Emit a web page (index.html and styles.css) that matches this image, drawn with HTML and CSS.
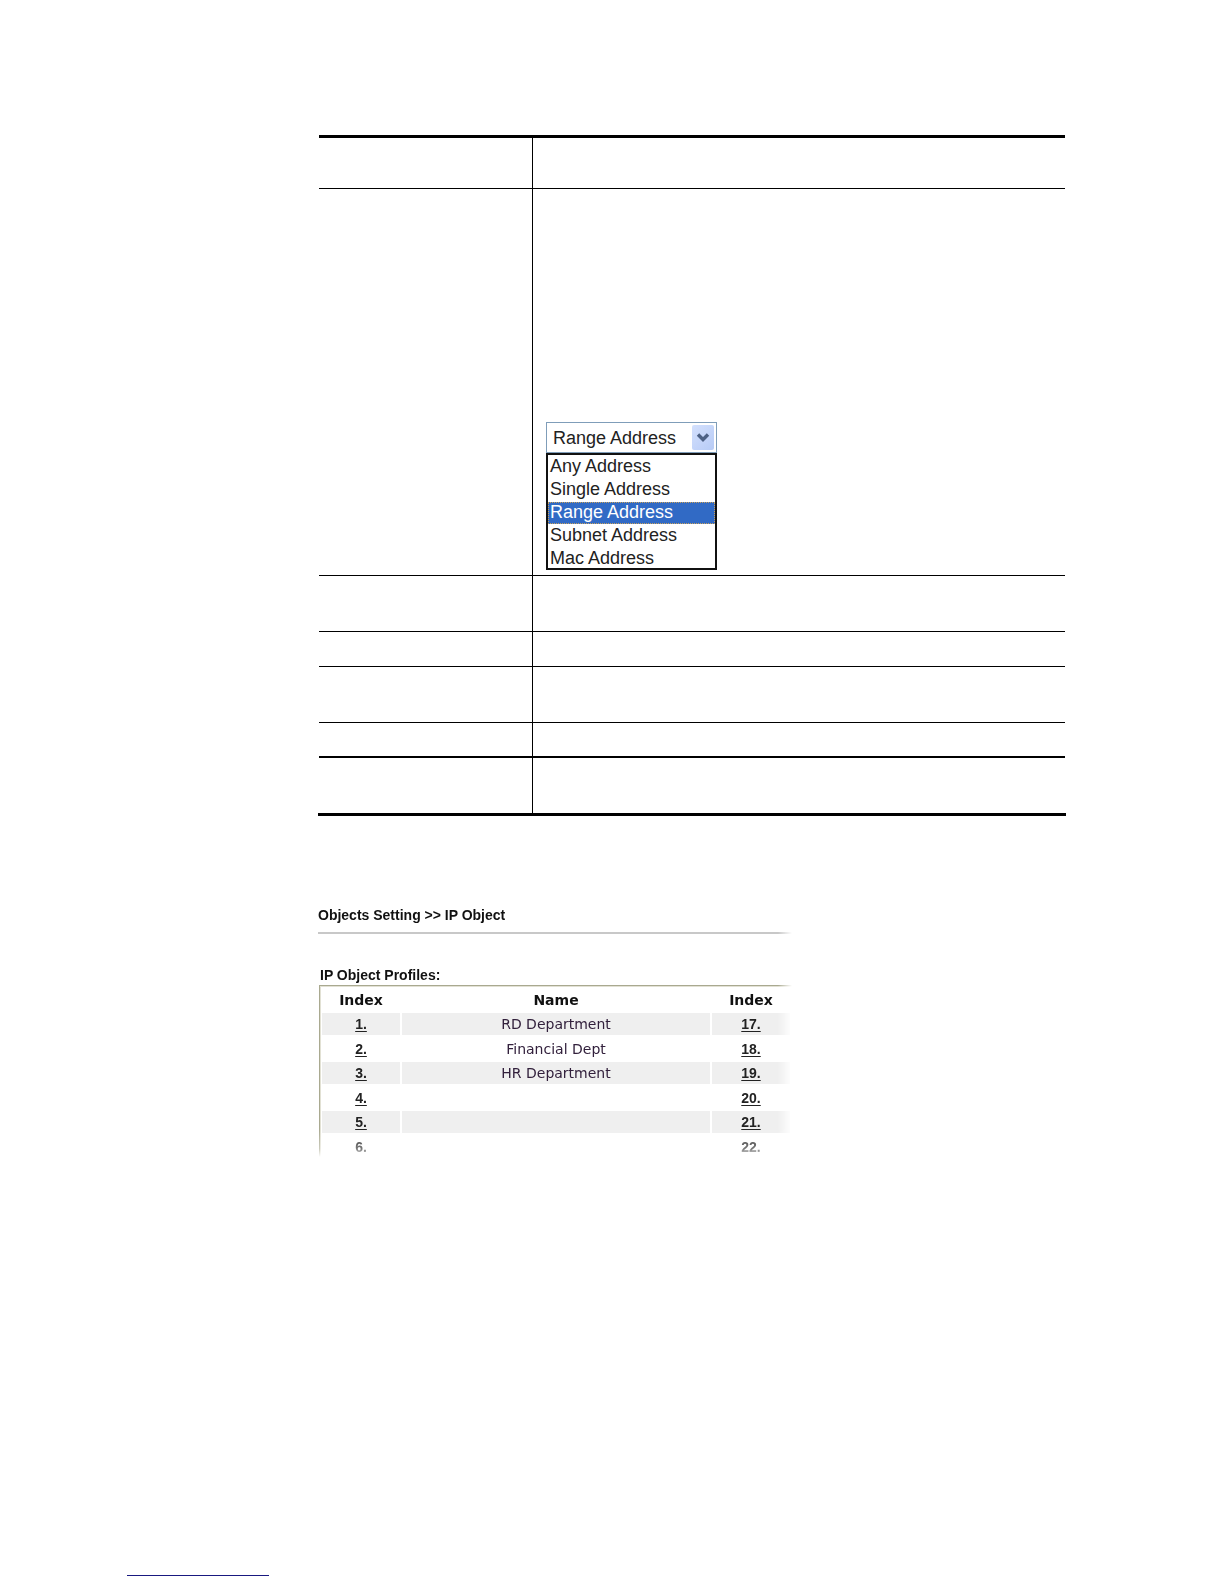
FILE: index.html
```
<!DOCTYPE html>
<html lang="en">
<head>
<meta charset="utf-8">
<title>Objects Setting - IP Object</title>
<link rel="stylesheet" href="styles.css">
</head>
<body>
<main class="sheet">
  <div class="spec-wrap">
    <table class="spec">
      <colgroup><col class="spec-key"><col></colgroup>
      <tbody>
        <tr class="row-head"><td></td><td></td></tr>
        <tr class="row-type">
          <td></td>
          <td class="type-cell">
            <div class="combo">
              <div class="combo-field">
                <select class="combo-select" aria-label="Address type">
                  <option>Any Address</option>
                  <option>Single Address</option>
                  <option selected>Range Address</option>
                  <option>Subnet Address</option>
                  <option>Mac Address</option>
                </select>
                <span class="combo-arrow">
                  <svg width="14" height="10" viewBox="0 0 14 10" aria-hidden="true"><path d="M2 1.5 7 6.5 12 1.5" fill="none" stroke="#4d6185" stroke-width="3.4"/></svg>
                </span>
              </div>
              <select class="combo-list" size="5" aria-label="Address type choices">
                <option>Any Address</option>
                <option>Single Address</option>
                <option selected>Range Address</option>
                <option>Subnet Address</option>
                <option>Mac Address</option>
              </select>
            </div>
          </td>
        </tr>
        <tr class="row-tall"><td></td><td></td></tr>
        <tr class="row-short"><td></td><td></td></tr>
        <tr class="row-tall"><td></td><td></td></tr>
        <tr class="row-short row-strong"><td></td><td></td></tr>
        <tr class="row-tall row-last"><td></td><td></td></tr>
      </tbody>
    </table>
  </div>

  <section class="panel">
    <h1 class="crumb">Objects Setting &gt;&gt; IP Object</h1>
    <hr class="rule">
    <h2 class="caption">IP Object Profiles:</h2>
    <div class="frame">
      <table class="profiles">
        <colgroup><col class="col-index"><col><col class="col-index"></colgroup>
        <thead>
          <tr><th>Index</th><th>Name</th><th>Index</th></tr>
        </thead>
        <tbody>
          <tr><td><a href="#1">1.</a></td><td>RD Department</td><td><a href="#17">17.</a></td></tr>
          <tr><td><a href="#2">2.</a></td><td>Financial Dept</td><td><a href="#18">18.</a></td></tr>
          <tr><td><a href="#3">3.</a></td><td>HR Department</td><td><a href="#19">19.</a></td></tr>
          <tr><td><a href="#4">4.</a></td><td></td><td><a href="#20">20.</a></td></tr>
          <tr><td><a href="#5">5.</a></td><td></td><td><a href="#21">21.</a></td></tr>
          <tr><td><a href="#6">6.</a></td><td></td><td><a href="#22">22.</a></td></tr>
        </tbody>
      </table>
    </div>
  </section>
</main>
<footer class="foot"><hr class="foot-rule"></footer>
</body>
</html>
```
FILE: styles.css
```
* { box-sizing: border-box; }

body {
  margin: 0;
  min-height: 100vh;
  display: flex;
  flex-direction: column;
  justify-content: space-between;
  background: #fff;
  color: #111;
  font-family: "Liberation Sans", Arial, sans-serif;
  font-size: 14px;
}

.sheet { padding: 135px 158px 0 318px; }

/* Ruled table */
.spec-wrap {
  padding: 0 1px;
  border-bottom: 3px solid #000;
}
.spec {
  width: 100%;
  table-layout: fixed;
  border-spacing: 0;
  border-top: 3px solid #000;
}
.spec-key { width: 214px; }
.spec td {
  padding: 0;
  border-bottom: 1px solid #000;
}
.spec td:first-child { border-right: 1px solid #000; }
.row-head { height: 51px; }
.row-type { height: 387px; }
.row-tall { height: 56px; }
.row-short { height: 35px; }
.spec .row-strong td { border-bottom-width: 2px; }
.row-last { height: 55px; }
.spec .row-last td { border-bottom: 0; }
.spec .type-cell {
  padding: 0 0 5px 13px;
  vertical-align: bottom;
}

/* Opened drop-down */
.combo {
  width: 171px;
  font-size: 18px;
}
.combo-field {
  display: flex;
  height: 31px;
  padding: 2px;
  border: 1px solid #7f9db9;
}
.combo-select {
  flex: 1;
  min-width: 0;
  padding: 0 0 0 4px;
  border: 0;
  appearance: none;
  background: #fff;
  color: #222;
  font: inherit;
}
.combo-arrow {
  display: flex;
  align-items: center;
  justify-content: center;
  width: 22px;
  border-radius: 2px;
  background: linear-gradient(135deg, #d3e0fd, #b7cbf6);
}
.combo-list {
  display: block;
  width: 100%;
  height: 117px;
  padding: 1px 0;
  border: 2px solid #111;
  border-radius: 0;
  background: #fff;
  font: inherit;
  overflow: hidden;
  scrollbar-width: none;
}
.combo-list option {
  height: 22px;
  min-height: 22px;
  margin-bottom: 1px;
  padding: 0 2px;
  line-height: 22px;
  color: #222;
}
.combo-list option:checked {
  background: linear-gradient(#316ac5, #316ac5);
  outline: 1px dotted #c9a25e;
  outline-offset: -1px;
  -webkit-text-fill-color: #fff;
}

/* Profile list, fading out to the right and bottom */
.panel {
  width: 474px;
  max-width: 100%;
  margin-top: 89px;
  mask-image: linear-gradient(to right, #000 460px, transparent), linear-gradient(#000 224px, rgba(0, 0, 0, 0.6) 244px, transparent 252px);
  mask-composite: intersect;
}
.crumb, .caption {
  margin: 0;
  font-size: 14px;
  line-height: 20px;
}
.rule {
  height: 2px;
  margin: 7px 0 31px;
  border: 0;
  background: #c8c8c8;
}
.caption { padding-left: 2px; }
.frame {
  margin-left: 1px;
  border-top: 1px solid #a9a990;
  border-left: 1px solid #a9a990;
  box-shadow: inset 1px 1px #e2e1d4;
}
.profiles {
  width: 100%;
  table-layout: fixed;
  border-spacing: 2px;
  font-family: "DejaVu Sans", Verdana, sans-serif;
  text-align: center;
}
.col-index { width: 78px; }
.profiles th, .profiles td { padding: 0; line-height: 22px; }
.profiles thead tr { height: 23px; }
.profiles tbody tr { height: 23px; }
.profiles tbody tr:nth-child(odd) { height: 22px; }
.profiles tbody tr:nth-child(odd) td { background: #efefef; }
.profiles td { color: #32203c; }
.profiles a {
  color: #222;
  font-family: "Liberation Sans", Arial, sans-serif;
  font-weight: bold;
  text-underline-offset: 2px;
}
.profiles tbody tr:last-child a { text-decoration: none; }

.foot { padding: 0 127px 8px; }
.foot-rule {
  width: 142px;
  height: 1px;
  margin: 0;
  border: 0;
  background: #191980;
}
```
